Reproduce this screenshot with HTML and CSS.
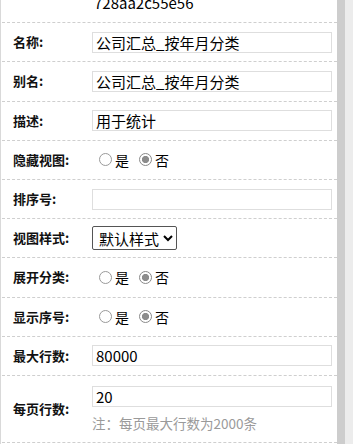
FILE: index.html
```html
<!DOCTYPE html>
<html lang="zh-CN">
<head>
<meta charset="utf-8">
<title>视图属性</title>
<link rel="stylesheet" href="styles.css">
</head>
<body>
<div class="page">
  <div class="content">
    <div class="form">
      <div class="row">
        <span class="label"></span>
        <span class="plain">728aa2c55e56</span>
      </div>
      <div class="row">
        <span class="label">名称:</span>
        <input class="text" type="text" value="公司汇总_按年月分类">
      </div>
      <div class="row">
        <span class="label">别名:</span>
        <input class="text" type="text" value="公司汇总_按年月分类">
      </div>
      <div class="row">
        <span class="label">描述:</span>
        <input class="text" type="text" value="用于统计">
      </div>
      <div class="row">
        <span class="label">隐藏视图:</span>
        <div class="radios">
          <label class="opt"><input type="radio" name="hide" class="radio"><span>是</span></label>
          <label class="opt"><input type="radio" name="hide" class="radio" checked><span>否</span></label>
        </div>
      </div>
      <div class="row">
        <span class="label">排序号:</span>
        <input class="text" type="text" value="">
      </div>
      <div class="row">
        <span class="label">视图样式:</span>
        <div><select class="sel"><option>默认样式</option></select></div>
      </div>
      <div class="row">
        <span class="label">展开分类:</span>
        <div class="radios">
          <label class="opt"><input type="radio" name="expand" class="radio"><span>是</span></label>
          <label class="opt"><input type="radio" name="expand" class="radio" checked><span>否</span></label>
        </div>
      </div>
      <div class="row">
        <span class="label">显示序号:</span>
        <div class="radios">
          <label class="opt"><input type="radio" name="seq" class="radio"><span>是</span></label>
          <label class="opt"><input type="radio" name="seq" class="radio" checked><span>否</span></label>
        </div>
      </div>
      <div class="row">
        <span class="label">最大行数:</span>
        <input class="text" type="text" value="80000">
      </div>
      <div class="row tall">
        <span class="label">每页行数:</span>
        <div class="stack">
          <input class="text" type="text" value="20">
          <div class="note">注：每页最大行数为2000条</div>
        </div>
      </div>
    </div>
  </div>
  <div class="scroll">
    <div class="thumb"></div>
    <div class="track"></div>
  </div>
</div>
</body>
</html>
```

FILE: styles.css
```css
* { box-sizing: border-box; }
html, body { margin: 0; padding: 0; }
body {
  font-family: "Noto Sans CJK SC", "Microsoft YaHei", sans-serif;
  color: #000;
  background: #fff;
  overflow: hidden;
}
.page {
  display: flex;
  height: 444px;
}
.content {
  flex: 0 0 337px;
  border-left: 1px solid #d9d9d9;
  padding-left: 1px;
  overflow: hidden;
}
.form {
  margin-top: -16px;
}
.row {
  display: grid;
  grid-template-columns: 90px 1fr;
  align-items: center;
  height: 39.2px;
  border-bottom: 1px dashed #cfcfcf;
  padding-right: 5px;
}
.row.tall {
  height: 66.8px;
}
.label {
  font-size: 13px;
  font-weight: bold;
  line-height: 18px;
  padding-left: 11px;
  color: #111;
}
.plain {
  font-size: 15px;
  line-height: 20px;
  padding-left: 2px;
}
.text {
  display: block;
  width: 100%;
  height: 21px;
  margin: 0;
  border: 1px solid #dedede;
  padding: 0 3px;
  font-family: "Noto Sans CJK SC", sans-serif;
  font-size: 15px;
  line-height: 19px;
  color: #000;
  background: #fff;
  outline: none;
}
.radios {
  display: flex;
  align-items: center;
  padding-left: 7px;
  gap: 10px;
}
.opt {
  display: flex;
  align-items: center;
  gap: 3px;
  font-size: 14px;
  line-height: 18px;
}
.radio {
  -webkit-appearance: none;
  appearance: none;
  width: 13px;
  height: 13px;
  margin: 0;
  border: 1px solid #9a9a9a;
  border-radius: 50%;
  background: #fff;
}
.radio:checked {
  border-color: #8a8a8a;
  background: radial-gradient(circle, #8c8c8c 0 3.3px, #fff 3.9px);
}
.sel {
  display: block;
  height: 24px;
  margin: 0;
  font-family: "Noto Sans CJK SC", sans-serif;
  font-size: 15px;
  color: #000;
  border: 1px solid #555;
  border-radius: 2px;
  background: #fff;
  padding: 0 0 0 2px;
}
.stack {
  display: flex;
  flex-direction: column;
  padding-top: 1px;
}
.note {
  margin-top: 7px;
  font-size: 13.5px;
  line-height: 18px;
  color: #9a9a9a;
}
.scroll {
  display: flex;
  flex: 0 0 16px;
}
.thumb {
  flex: 0 0 8px;
  background: #cdcdcd;
}
.track {
  flex: 0 0 8px;
  background: #ececec;
}
```
